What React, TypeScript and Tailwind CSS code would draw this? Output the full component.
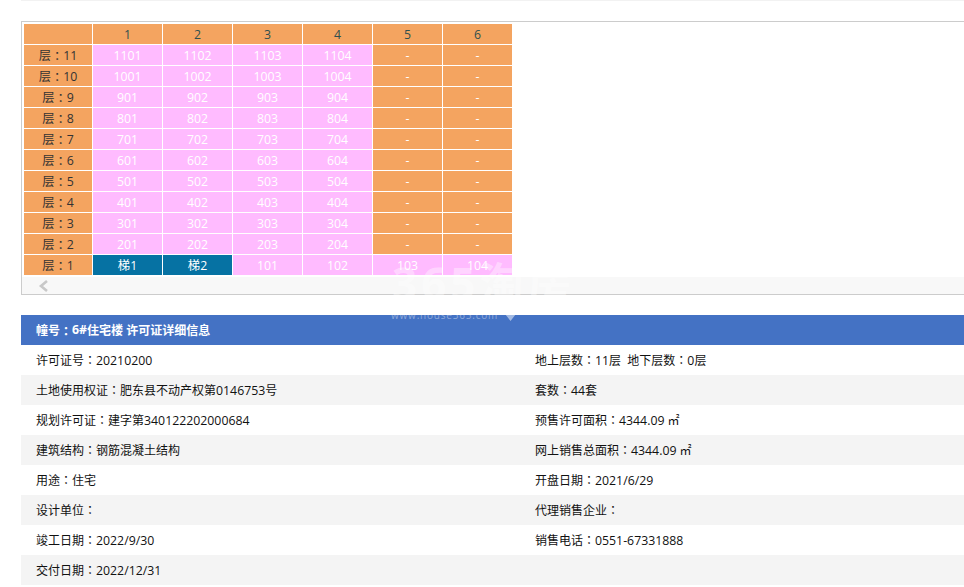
import React from "react";

const floors = [11, 10, 9, 8, 7, 6, 5, 4, 3, 2];
const info = [
  ["许可证号：20210200", "地上层数：11层  地下层数：0层"],
  ["土地使用权证：肥东县不动产权第0146753号", "套数：44套"],
  ["规划许可证：建字第340122202000684", "预售许可面积：4344.09 ㎡"],
  ["建筑结构：钢筋混凝土结构", "网上销售总面积：4344.09 ㎡"],
  ["用途：住宅", "开盘日期：2021/6/29"],
  ["设计单位：", "代理销售企业："],
  ["竣工日期：2022/9/30", "销售电话：0551-67331888"],
  ["交付日期：2022/12/31", ""],
];

// colon is centered in the reference (TC font draws it that way), latin runs are a bit wider than 12px
const Label = ({ text }: { text: string }) => (
  <>
    {text.split(/(：|[0-9/.#-]+)/).map((part, i) =>
      part === "：" ? (
        <span key={i} className="font-['Noto_Sans_CJK_TC',sans-serif]">：</span>
      ) : i % 2 === 1 ? (
        <span key={i} className="text-[12.3px]">{part}</span>
      ) : (
        <React.Fragment key={i}>{part}</React.Fragment>
      )
    )}
  </>
);

const Cell = ({ className, children }: { className: string; children?: React.ReactNode }) => (
  <div className={`h-5 flex items-center justify-center pt-px text-[12.3px] leading-5 ${className}`}>{children}</div>
);

export default function App() {
  return (
    <div className="relative h-[587px] w-[964px] overflow-hidden bg-white font-['Open_Sans','Noto_Sans_CJK_SC',sans-serif]">
      <div className="ml-[21px] h-px bg-[#f2f2f2]" />

      <div className="ml-[21px] mt-5 h-[274px] border border-r-0 border-[#cccccc]">
        <div className="p-[2px] pb-0 h-[255px]">
          <div className="grid grid-cols-[68px_repeat(6,69px)] gap-px">
            <Cell className="bg-[#f4a460]" />
            {[1, 2, 3, 4, 5, 6].map((n) => (
              <Cell key={n} className="bg-[#f4a460] text-[#2f4f4f]">{n}</Cell>
            ))}
            {floors.map((f) => (
              <React.Fragment key={f}>
                <Cell className="bg-[#f4a460] text-[#333333]"><Label text={`层：${f}`} /></Cell>
                {[1, 2, 3, 4].map((u) => (
                  <Cell key={u} className="bg-[#ffbbff] text-white">{f * 100 + u}</Cell>
                ))}
                <Cell className="bg-[#f4a460] text-white">-</Cell>
                <Cell className="bg-[#f4a460] text-white">-</Cell>
              </React.Fragment>
            ))}
            <Cell className="bg-[#f4a460] text-[#333333]"><Label text="层：1" /></Cell>
            <Cell className="bg-[#0672a3] text-white">梯1</Cell>
            <Cell className="bg-[#0672a3] text-white">梯2</Cell>
            {[101, 102, 103, 104].map((n) => (
              <Cell key={n} className="bg-[#ffbbff] text-white">{n}</Cell>
            ))}
          </div>
        </div>
        <div className="flex h-[17px] items-center bg-[#f8f8f8] pl-4">
          <svg width="11" height="12" viewBox="0 0 11 12" fill="none">
            <path d="M9 1 L3 6 L9 11" stroke="#c8c8c8" strokeWidth="2.6" />
          </svg>
        </div>
      </div>

      <div className="ml-[21px] mt-5">
        <div className="flex h-[30px] items-center bg-[#4472c4] pl-[15px] pt-px text-[12px] font-bold text-white">
          <Label text="幢号：6#住宅楼 许可证详细信息" />
        </div>
        {info.map(([left, right], i) => (
          <div
            key={left}
            className={`flex h-[30px] items-center pt-px text-[12px] text-[#111111] ${i % 2 === 1 ? "bg-[#f4f4f4]" : "bg-white"}`}
          >
            <div className="w-[514px] pl-[15px]"><Label text={left} /></div>
            <div className="whitespace-pre"><Label text={right} /></div>
          </div>
        ))}
      </div>

      {/* watermark */}
      <div className="absolute left-[392px] top-[261px] text-[44px] font-bold leading-none tracking-[4px] text-white/40">
        365淘房
      </div>
      <div className="absolute left-[391px] top-[309px] text-[10px] leading-3 tracking-[0.8px] text-white/40">
        www.house365.com
      </div>
      <svg className="absolute left-[505px] top-[312px]" width="11" height="9" viewBox="0 0 11 9">
        <path d="M0 2 L3 0 L5.5 2 L8 0 L11 2 L5.5 9 Z" fill="#ffffff" fillOpacity="0.5" />
      </svg>
    </div>
  );
}
